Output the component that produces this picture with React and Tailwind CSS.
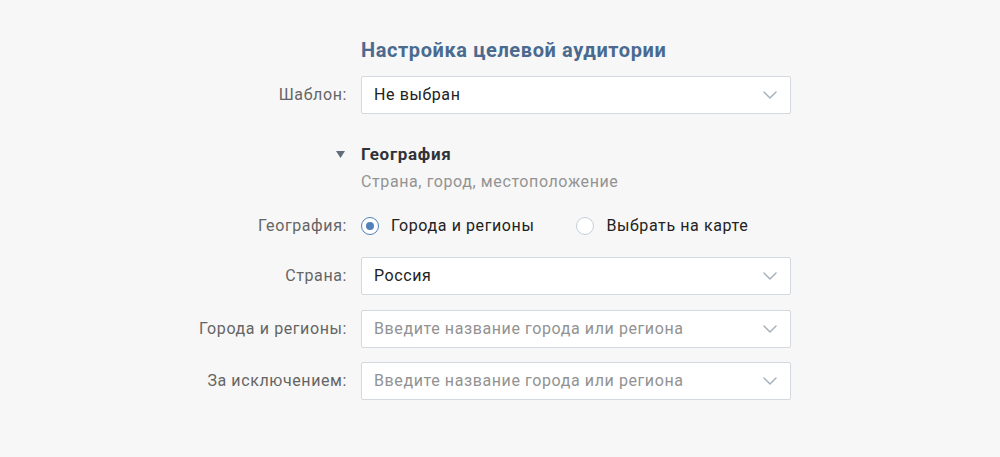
import React from 'react';

const Chevron = () => (
  <svg width="14" height="8" viewBox="0 0 14 8" fill="none" className="shrink-0">
    <path d="M1 1l6 6 6-6" stroke="#a8b2bd" strokeWidth="1.5" strokeLinecap="round" strokeLinejoin="round" />
  </svg>
);

const Select = ({ value, placeholder }) => (
  <div className="w-[430px] h-[38px] bg-white border border-[#d3d9de] rounded-[2px] flex items-center justify-between pl-[12px] pr-[13px]">
    {value ? (
      <span className="text-[16px] tracking-[0.6px] text-[#222]">{value}</span>
    ) : (
      <span className="text-[16px] tracking-[0.6px] text-[#929292]">{placeholder}</span>
    )}
    <Chevron />
  </div>
);

const Row = ({ label, children, className = '' }) => (
  <div className={`flex items-center ${className}`}>
    <div className="w-[173px] text-right text-[16px] tracking-[0.6px] text-[#656565] whitespace-nowrap">{label}</div>
    <div className="ml-[14px]">{children}</div>
  </div>
);

const Radio = ({ checked, label }) => (
  <div className="flex items-center gap-[12px]">
    <div className={`w-[18px] h-[18px] rounded-full border flex items-center justify-center bg-white ${checked ? 'border-[#5181b8]' : 'border-[#c5d0db]'}`}>
      {checked && <div className="w-[8px] h-[8px] rounded-full bg-[#5181b8]" />}
    </div>
    <span className="text-[16px] tracking-[0.6px] text-[#222]">{label}</span>
  </div>
);

export default function App() {
  return (
    <div className="w-full min-h-[457px] bg-[#f7f7f7] font-['Roboto',sans-serif]">
      <div className="ml-[174px] pt-[37px] w-[617px]">
        <div className="pl-[187px] text-[20px] tracking-[0.6px] font-bold text-[#4a6a8f] leading-[26px]">
          Настройка целевой аудитории
        </div>

        <Row label="Шаблон:" className="mt-[13px]">
          <Select value="Не выбран" />
        </Row>

        <div className="mt-[29px] flex items-center">
          <div className="w-[173px] flex justify-end pr-[2px]">
            <svg width="9" height="7" viewBox="0 0 9 7">
              <path d="M0 0h9L4.5 7z" fill="#626d7a" />
            </svg>
          </div>
          <div className="ml-[14px] text-[17px] tracking-[0.7px] font-bold text-[#2f3337] leading-[22px]">География</div>
        </div>
        <div className="pl-[187px] mt-[7px] text-[16px] tracking-[0.6px] text-[#939393] leading-[20px]">
          Страна, город, местоположение
        </div>

        <Row label="География:" className="mt-[22px]">
          <div className="flex items-center gap-[42px]">
            <Radio checked label="Города и регионы" />
            <Radio label="Выбрать на карте" />
          </div>
        </Row>

        <Row label="Страна:" className="mt-[19px]">
          <Select value="Россия" />
        </Row>
        <Row label="Города и регионы:" className="mt-[15px]">
          <Select placeholder="Введите название города или региона" />
        </Row>
        <Row label="За исключением:" className="mt-[14px]">
          <Select placeholder="Введите название города или региона" />
        </Row>
      </div>
    </div>
  );
}
